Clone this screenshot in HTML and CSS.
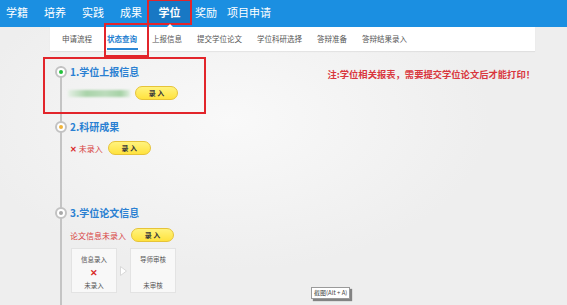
FILE: index.html
```html
<html>
<head>
	<title>学位 - 状态查询</title>
	<link rel="stylesheet" href="styles.css">
</head>
<body>
	<div class="topnav">
		<a>学籍</a>
		<a>培养</a>
		<a>实践</a>
		<a>成果</a>
		<a class="active">学位</a>
		<a>奖励</a>
		<a class="wide">项目申请</a>
	</div>

	<div class="subnav">
		<a>申请流程</a>
		<a class="active">状态查询</a>
		<a>上报信息</a>
		<a>提交学位论文</a>
		<a>学位科研选择</a>
		<a>答辩准备</a>
		<a>答辩结果录入</a>
	</div>

	<div class="main">
		<div class="timeline">
			<!-- step 1 -->
			<div class="step marked">
				<div class="marker"><span class="dot green"></span></div>
				<div class="step-body">
					<div class="step-title">1.学位上报信息</div>
					<div class="row">
						<div class="blurred"></div>
						<div class="btn">录&nbsp;入</div>
					</div>
				</div>
			</div>

			<!-- step 2 -->
			<div class="step step2">
				<div class="marker"><span class="dot yellow"></span></div>
				<div class="step-body">
					<div class="step-title">2.科研成果</div>
					<div class="row">
						<span class="status"><b class="cross">✕</b> 未录入</span>
						<div class="btn">录&nbsp;入</div>
					</div>
				</div>
			</div>

			<!-- step 3 -->
			<div class="step step3">
				<div class="marker"><span class="dot gray"></span></div>
				<div class="step-body">
					<div class="step-title">3.学位论文信息</div>
					<div class="row">
						<span class="status">论文信息未录入</span>
						<div class="btn">录&nbsp;入</div>
					</div>
					<div class="flow">
						<div class="flow-box">
							<span>信息录入</span>
							<b class="cross big">✕</b>
							<span>未录入</span>
						</div>
						<svg class="flow-arrow" width="7" height="10" viewBox="0 0 7 10">
							<polygon points="0.5,0.5 6.5,5 0.5,9.5" fill="#fff" stroke="#d8d8d8" stroke-width="1"/>
						</svg>
						<div class="flow-box">
							<span>导师审核</span>
							<span></span>
							<span>未审核</span>
						</div>
					</div>
				</div>
			</div>
		</div>

		<div class="note">注:学位相关报表，需要提交学位论文后才能打印！</div>
	</div>

	<div class="tip">截图(Alt + A)</div>
</body>
</html>
```

FILE: styles.css
```css
html, body {
    overflow: hidden;
}

body {
    margin: 0;
    height: 305px;
    font-family: "Noto Sans CJK SC", "Microsoft YaHei", sans-serif;
    background: radial-gradient(ellipse 260px 150px at 230px 120px, #f9f9f9, #eeeeee);
    background-color: #eeeeee;
    position: relative;
}

a {
    cursor: pointer;
}

/* top blue bar */
.topnav {
    height: 27px;
    background-color: #1b8fe1;
    display: flex;
}

.topnav a {
    flex: none;
    width: 38px;
    height: 24px;
    line-height: 24px;
    display: flex;
    justify-content: center;
    white-space: nowrap;
    color: #fff;
    font-size: 11px;
}

.topnav a:first-child {
    margin-left: -2px;
}

.topnav .wide {
    margin-left: 5px;
}

.topnav .active {
    position: relative;
    width: 43px;
    margin-left: -2px;
    margin-right: -4px;
    font-weight: bold;
    background-color: #1878c4;
    outline: 2px solid #e2252b;
    outline-offset: -1px;
}

.topnav .active::after {
    content: "";
    position: absolute;
    left: 50%;
    bottom: -3px;
    margin-left: -3px;
    border-left: 3px solid transparent;
    border-right: 3px solid transparent;
    border-bottom: 3px solid #fff;
}

/* second level tabs */
.subnav {
    margin-left: 50px;
    width: 480.5px;
    height: 24px;
    padding-left: 4.5px;
    background-color: #fff;
    box-shadow: 0 1px 1px rgba(0, 0, 0, 0.06);
    display: flex;
}

.subnav a {
    position: relative;
    font-size: 7.5px;
    color: #555;
    padding: 0 7.5px;
    line-height: 24px;
}

.subnav .active {
    color: #1f7fd0;
    font-weight: bold;
}

.subnav .active::after {
    content: "";
    position: absolute;
    left: 7px;
    right: 7px;
    bottom: 1px;
    height: 2.5px;
    background-color: #2a87d6;
}

.subnav .active::before {
    content: "";
    position: absolute;
    left: 4.5px;
    top: -4px;
    width: 41px;
    height: 30px;
    border: 2px solid #e2252b;
}

/* content */
.main {
    margin-left: 50px;
    width: 485px;
    padding-top: 15px;
    display: flex;
    justify-content: space-between;
    align-items: flex-start;
}

.timeline {
    margin-left: 10px;
    height: 240px;
    border-left: 2px solid #c4c4c4;
}

.step {
    display: flex;
    align-items: flex-start;
}

.step2 {
    margin-top: 21px;
}

.step3 {
    margin-top: 52px;
}

.marked {
    position: relative;
}

.marked::before {
    content: "";
    position: absolute;
    left: -19px;
    top: -9px;
    width: 159px;
    height: 53px;
    border: 2px solid #e2252b;
}

.marker {
    flex: none;
    width: 8px;
    height: 8px;
    margin-left: -7px;
    border: 2px solid #c2c2c2;
    border-radius: 50%;
    background-color: #fff;
    display: flex;
    align-items: center;
    justify-content: center;
}

.dot {
    width: 4px;
    height: 4px;
    border-radius: 50%;
}

.green { background-color: #22c03a; }
.yellow { background-color: #f0b43a; }
.gray { background-color: #a8a8a8; }

.step-body {
    margin-left: 3px;
}

.step-title {
    height: 12px;
    line-height: 12px;
    font-size: 10px;
    font-weight: bold;
    color: #2a80d2;
}

.row {
    margin-top: 8px;
    height: 14px;
    display: flex;
    align-items: center;
    gap: 5px;
}

.step3 .row {
    margin-top: 9px;
}

.blurred {
    width: 62px;
    height: 7px;
    margin-left: -2px;
    background: linear-gradient(90deg, #e6f0e6, #a9d3a9 30%, #bcdcbc 60%, #a6d2a6 85%, #dfeedf);
    filter: blur(0.8px);
}

.btn {
    width: 41px;
    height: 12px;
    line-height: 12px;
    border: 1px solid #e6c338;
    border-radius: 7px;
    background: linear-gradient(#fff37e, #ffe23e);
    font-size: 7px;
    font-weight: bold;
    color: #3a3a3a;
    text-align: center;
}

.status {
    font-size: 8px;
    color: #d8413f;
}

.cross {
    color: #d92a2a;
    font-weight: bold;
}

.flow {
    margin-top: 6px;
    margin-left: 1px;
    display: flex;
    align-items: center;
    gap: 3px;
}

.flow-box {
    width: 44px;
    height: 35px;
    padding: 6px 0 2px;
    background-color: #f8f8f8;
    border: 1px solid #e3e3e3;
    display: flex;
    flex-direction: column;
    align-items: center;
    justify-content: space-between;
    font-size: 6.5px;
    color: #555;
}

.flow-box span {
    height: 9px;
    line-height: 9px;
}

.big {
    font-size: 9px;
    line-height: 9px;
}

.note {
    margin-top: 2px;
    line-height: 12px;
    font-size: 9.3px;
    font-weight: bold;
    color: #d9363d;
}

/* screenshot tool tooltip, floats over the page */
.tip {
    position: absolute;
    left: 311px;
    top: 287px;
    padding: 0 2px;
    height: 10px;
    line-height: 10px;
    font-size: 6px;
    color: #444;
    background-color: #fff;
    border: 1px solid #9a9a9a;
    box-shadow: 2px 2px 1px rgba(0, 0, 0, 0.45);
}
```
